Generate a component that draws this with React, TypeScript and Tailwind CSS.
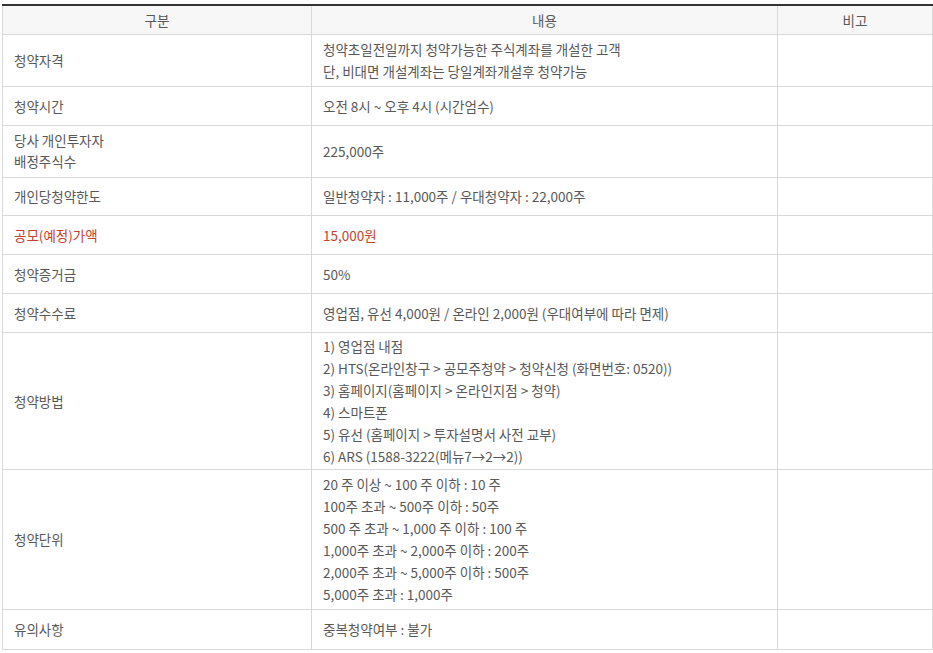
import React from "react";

type Row = { label: string[]; content: string[]; h: string; red?: boolean };

const rows: Row[] = [
  {
    label: ["청약자격"],
    content: [
      "청약초일전일까지 청약가능한 주식계좌를 개설한 고객",
      "단, 비대면 개설계좌는 당일계좌개설후 청약가능",
    ],
    h: "h-[52px]",
  },
  { label: ["청약시간"], content: ["오전 8시 ~ 오후 4시 (시간엄수)"], h: "h-[39px]" },
  {
    label: ["당사 개인투자자", "배정주식수"],
    content: ["225,000주"],
    h: "h-[52px]",
  },
  {
    label: ["개인당청약한도"],
    content: ["일반청약자 : 11,000주 / 우대청약자 : 22,000주"],
    h: "h-[38px]",
  },
  { label: ["공모(예정)가액"], content: ["15,000원"], h: "h-[39px]", red: true },
  { label: ["청약증거금"], content: ["50%"], h: "h-[39px]" },
  {
    label: ["청약수수료"],
    content: ["영업점, 유선 4,000원 / 온라인 2,000원 (우대여부에 따라 면제)"],
    h: "h-[39px]",
  },
  {
    label: ["청약방법"],
    content: [
      "1) 영업점 내점",
      "2) HTS(온라인창구 > 공모주청약 > 청약신청 (화면번호: 0520))",
      "3) 홈페이지(홈페이지 > 온라인지점 > 청약)",
      "4) 스마트폰",
      "5) 유선 (홈페이지 > 투자설명서 사전 교부)",
      "6) ARS (1588-3222(메뉴7→2→2))",
    ],
    h: "h-[137px]",
  },
  {
    label: ["청약단위"],
    content: [
      "20 주 이상 ~ 100 주 이하 : 10 주",
      "100주 초과 ~ 500주 이하 : 50주",
      "500 주 초과 ~ 1,000 주 이하 : 100 주",
      "1,000주 초과 ~ 2,000주 이하 : 200주",
      "2,000주 초과 ~ 5,000주 이하 : 500주",
      "5,000주 초과 : 1,000주",
    ],
    h: "h-[140px]",
  },
  { label: ["유의사항"], content: ["중복청약여부 : 불가"], h: "h-[40px]" },
];

export default function App() {
  return (
    <div
      className="bg-white pt-[4px] pl-[2px] text-[13.5px] leading-[22px] text-[#585858]"
      style={{ fontFamily: '"Noto Sans CJK KR", "Noto Sans", sans-serif' }}
    >
      <table className="w-[930px] table-fixed border-collapse border-t-2 border-t-[#333]">
        <colgroup>
          <col className="w-[309px]" />
          <col className="w-[466px]" />
          <col className="w-[155px]" />
        </colgroup>
        <thead>
          <tr className="bg-[#f7f7f7]">
            <th className="h-[29px] border border-t-0 border-[#d9d9d9] p-0 text-center font-normal">구분</th>
            <th className="h-[29px] border border-t-0 border-[#d9d9d9] p-0 text-center font-normal">내용</th>
            <th className="h-[29px] border border-t-0 border-[#d9d9d9] p-0 text-center font-normal">비고</th>
          </tr>
        </thead>
        <tbody>
          {rows.map((row, i) => (
            <tr key={i} className={row.red ? "text-[#c8412c]" : ""}>
              <td className={`${row.h} border border-[#d9d9d9] px-[11px] py-0 align-middle`}>
                {row.label.map((l, j) => (
                  <div key={j} className={row.label.length > 1 ? "leading-[21px]" : ""}>
                    {l}
                  </div>
                ))}
              </td>
              <td className={`${row.h} border border-[#d9d9d9] px-[11px] py-0 align-middle`}>
                {row.content.map((c, j) => (
                  <div key={j}>{c}</div>
                ))}
              </td>
              <td className={`${row.h} border border-[#d9d9d9] p-0`} />
            </tr>
          ))}
        </tbody>
      </table>
    </div>
  );
}
